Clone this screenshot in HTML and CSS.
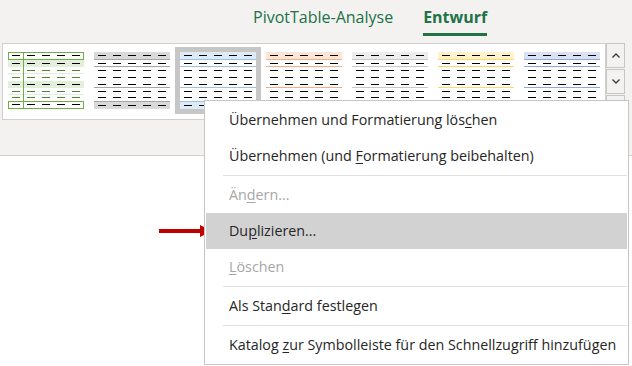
FILE: index.html
```html
<!DOCTYPE html>
<html lang="de">
<head>
    <meta charset="UTF-8">
    <meta name="viewport" content="width=device-width, initial-scale=1.0">
    <title>Tabellenformate</title>
    <link rel="stylesheet" href="styles.css">
</head>
<body>
    <div class="ribbon">
        <div class="tabs">
            <span class="tab">PivotTable-Analyse</span>
            <span class="tab active">Entwurf</span>
        </div>

        <div class="gallery-row">
            <div class="gallery">
                <div class="style-cell">
                    <div class="thumb green">
                        <div class="r box"></div>
                        <div class="r band"></div>
                        <div class="r g sep"></div>
                        <div class="r g"></div>
                        <div class="r band"></div>
                        <div class="r g sep"></div>
                        <div class="r g short"></div>
                        <div class="r box"></div>
                    </div>
                </div>
                <div class="style-cell">
                    <div class="thumb grey"><div class="r head"></div><div class="r line"></div><div class="r"></div><div class="r"></div><div class="r line"></div><div class="r"></div><div class="r short"></div><div class="r total"></div></div>
                </div>
                <div class="style-cell selected">
                    <div class="thumb blue"><div class="r head"></div><div class="r line"></div><div class="r"></div><div class="r"></div><div class="r line"></div><div class="r"></div><div class="r short"></div><div class="r total"></div></div>
                </div>
                <div class="style-cell">
                    <div class="thumb orange"><div class="r head"></div><div class="r line"></div><div class="r"></div><div class="r"></div><div class="r line"></div><div class="r"></div><div class="r short"></div><div class="r total"></div></div>
                </div>
                <div class="style-cell">
                    <div class="thumb light"><div class="r head"></div><div class="r line"></div><div class="r"></div><div class="r"></div><div class="r line"></div><div class="r"></div><div class="r short"></div><div class="r total"></div></div>
                </div>
                <div class="style-cell">
                    <div class="thumb yellow"><div class="r head"></div><div class="r line"></div><div class="r"></div><div class="r"></div><div class="r line"></div><div class="r"></div><div class="r short"></div><div class="r total"></div></div>
                </div>
                <div class="style-cell">
                    <div class="thumb steel"><div class="r head"></div><div class="r line"></div><div class="r"></div><div class="r"></div><div class="r line"></div><div class="r"></div><div class="r short"></div><div class="r total"></div></div>
                </div>
            </div>

            <div class="scroller">
                <button class="scroll-btn">
                    <svg width="8" height="5" viewBox="0 0 8 5"><path d="M0.5 4.5 L4 1 L7.5 4.5" fill="none" stroke="#3b3a39" stroke-width="1.3"/></svg>
                </button>
                <button class="scroll-btn">
                    <svg width="8" height="5" viewBox="0 0 8 5"><path d="M0.5 0.5 L4 4 L7.5 0.5" fill="none" stroke="#3b3a39" stroke-width="1.3"/></svg>
                </button>
                <button class="scroll-btn"></button>
            </div>
        </div>
    </div>

    <svg class="pointer" width="53" height="13" viewBox="0 0 53 13">
        <rect x="0" y="4" width="43" height="4" fill="#c00000"/>
        <polygon points="41,0 53,6 41,12" fill="#c00000"/>
    </svg>

    <ul class="menu">
        <li class="item">Übernehmen und Formatierung lös<u>c</u>hen</li>
        <li class="item">Übernehmen (und <u>F</u>ormatierung beibehalten)</li>
        <li class="divider"></li>
        <li class="item disabled">Än<u>d</u>ern...</li>
        <li class="item hover">Du<u>p</u>lizieren...</li>
        <li class="item disabled"><u>L</u>öschen</li>
        <li class="divider"></li>
        <li class="item">Als Stan<u>d</u>ard festlegen</li>
        <li class="divider"></li>
        <li class="item">Katalog <u>z</u>ur Symbolleiste für den Schnellzugriff hinzufügen</li>
    </ul>
</body>
</html>
```

FILE: styles.css
```css
body {
    margin: 0;
    background-color: #fff;
    font-family: "Open Sans", "Noto Sans", sans-serif;
    color: #262626;
}

.ribbon {
    height: 155px;
    background-color: #f3f2f1;
    border-bottom: 1px solid #d2d0ce;
}

/* tabs */
.tabs {
    display: flex;
    gap: 30px;
    height: 43px;
    padding-left: 253px;
    box-sizing: border-box;
}

.tab {
    padding-top: 7px;
    padding-bottom: 3px;
    line-height: 20px;
    font-size: 16px;
    color: #217346;
    border-bottom: 3px solid transparent;
    height: 23px;
}

.tab.active {
    font-weight: bold;
    border-bottom-color: #217346;
}

/* style gallery */
.gallery-row {
    display: flex;
    padding-left: 2px;
}

.gallery {
    display: flex;
    width: 602px;
    padding: 3px 0 2px;
    background-color: #fff;
    border: 1px solid #d2d0ce;
}

.style-cell {
    width: 86px;
    height: 67px;
    padding: 5px;
    box-sizing: border-box;
}

.style-cell.selected {
    background-color: #c6c6c6;
}

.thumb {
    --dash: #000;
    --band: #d9d9d9;
    --line: #a6a6a6;
    position: relative;
    width: 76px;
    height: 57px;
    background-color: #fff;
}

.thumb.grey   { --band: #d9d9d9; --line: #a6a6a6; }
.thumb.blue   { --band: #ddebf7; --line: #9bc2e6; }
.thumb.orange { --band: #fce4d6; --line: #f4b084; }
.thumb.light  { --band: #ededed; --line: #c9c9c9; }
.thumb.yellow { --band: #fff2cc; --line: #ffd966; }
.thumb.steel  { --band: #d9e1f2; --line: #8ea9db; }

.r {
    height: 7px;
    box-sizing: border-box;
    background: repeating-linear-gradient(to right, var(--dash) 0 8px, transparent 8px 15px) 4px 3px / 68px 1px no-repeat;
}

.r.short {
    height: 6px;
    background-position: 4px 2px;
}

.r.head {
    height: 8px;
    background-color: var(--band);
    border-bottom: 1px solid var(--line);
}

.r.line {
    border-bottom: 1px solid var(--line);
}

.r.total {
    height: 8px;
    background-color: var(--band);
    border-top: 1px solid var(--line);
}

/* green style: boxed header/total, first column line */
.thumb.green::after {
    content: "";
    position: absolute;
    left: 15px;
    top: 0;
    bottom: 0;
    width: 1px;
    background-color: #70ad47;
}

.r.box {
    height: 8px;
    border: 1px solid #70ad47;
    background-position: 3px 2px;
}

.r.band {
    background-color: #e2efda;
}

.r.g {
    --dash: #548235;
}

.r.sep {
    border-bottom: 1px solid #e2efda;
}

/* scroll buttons */
.scroller {
    display: flex;
    flex-direction: column;
    gap: 1px;
}

.scroll-btn {
    width: 19px;
    height: 25px;
    padding: 0;
    display: flex;
    align-items: center;
    justify-content: center;
    background-color: #f3f2f1;
    border: 1px solid #c8c6c4;
}

/* context menu */
.pointer {
    position: absolute;
    left: 159px;
    top: 225px;
}

.menu {
    position: absolute;
    left: 204px;
    top: 100px;
    width: 425px;
    margin: 0;
    padding: 1px;
    list-style: none;
    box-sizing: border-box;
    background-color: #fff;
    border: 1px solid #c6c6c6;
}

.item {
    height: 36px;
    line-height: 36px;
    padding-left: 23px;
    font-size: 14.3px;
    white-space: nowrap;
}

.item u {
    text-underline-offset: 2px;
}

.item.disabled {
    color: #a6a6a6;
}

.item.hover {
    background-color: #d2d2d2;
}

.divider {
    height: 1px;
    margin: 1px 0 1px 17px;
    background-color: #e1dfdd;
}
```
